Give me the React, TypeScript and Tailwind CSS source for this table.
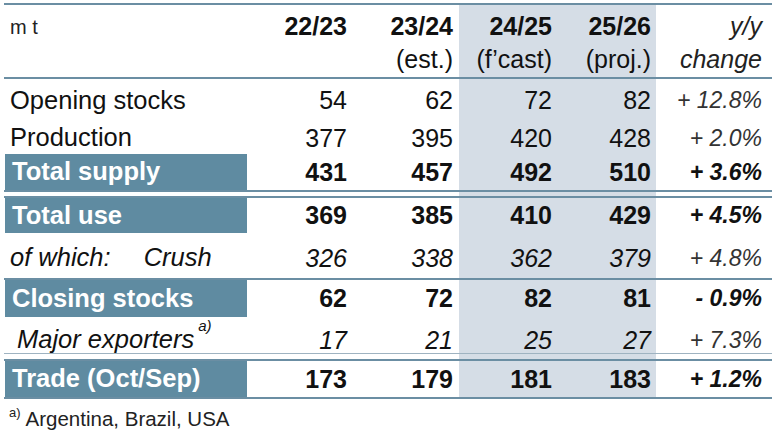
import React from 'react';

const cols = 'grid grid-cols-[243px_106px_106px_99px_98px_116px]';
const shade = 'bg-[#d5dde6]';
const line = 'border-[#6b8ea3]';

type Kind = 'normal' | 'bold' | 'italic';

interface RowProps {
  label: React.ReactNode;
  values: string[];
  change: string;
  kind: Kind;
  boxed?: boolean;
  className?: string;
  padTop?: string;
}

const pads = ['pr-[6px]', 'pr-[6px]', 'pr-[6px]', 'pr-[5px]'];

const Row: React.FC<RowProps> = ({ label, values, change, kind, boxed = false, className = '', padTop = '' }) => {
  const weight = kind === 'bold' ? 'font-bold' : 'font-normal';
  const style = kind === 'italic' ? 'italic' : 'not-italic';
  return (
    <div className={`${cols} ${className}`}>
      {boxed ? (
        <div className="ml-[1px] flex items-center bg-[#5f8ba1] pl-[7px] text-[25.5px] font-bold leading-none text-white">
          {label}
        </div>
      ) : (
        <div className={`flex items-center pl-[6px] text-[25.5px] leading-none text-[#111] ${padTop}`}>{label}</div>
      )}
      {values.map((v, i) => (
        <div
          key={i}
          className={`flex items-center justify-end text-[25px] leading-none text-[#111] ${weight} ${style} ${pads[i]} ${padTop} ${i >= 2 ? shade : ''}`}
        >
          {v}
        </div>
      ))}
      <div
        className={`flex items-center justify-end pr-[10px] text-[23px] italic leading-none ${
          kind === 'bold' ? 'font-bold text-[#111]' : 'font-normal text-[#333]'
        } ${padTop}`}
      >
        {change}
      </div>
    </div>
  );
};

const Gap: React.FC<{ className: string }> = ({ className }) => (
  <div className={`${cols} ${className}`}>
    <div />
    <div />
    <div />
    <div className={shade} />
    <div className={shade} />
    <div />
  </div>
);

export default function App() {
  const head1 = ['22/23', '23/24', '24/25', '25/26'];
  const head2 = ['', '(est.)', '(f\u2019cast)', '(proj.)'];

  return (
    <div
      className="h-[436px] w-[776px] overflow-hidden bg-white pt-[3px]"
      style={{ fontFamily: '"Liberation Sans", Arial, sans-serif' }}
    >
      <div className="ml-[4px] w-[768px]">
        {/* header */}
        <div className={`${cols} h-[76px] border-t-2 border-b-2 ${line}`}>
          <div className="pl-[6px] pt-[6px] text-[20px] leading-[33px] text-[#222]">m t</div>
          {head1.map((h, i) => (
            <div
              key={h}
              className={`flex flex-col items-end pt-[5px] text-[25px] leading-[33px] text-[#111] ${pads[i]} ${i >= 2 ? shade : ''}`}
            >
              <span className="font-bold">{h}</span>
              <span>{head2[i]}</span>
            </div>
          ))}
          <div className="flex flex-col items-end pr-[10px] pt-[5px] text-[25px] italic leading-[33px] text-[#222]">
            <span>y/y</span>
            <span>change</span>
          </div>
        </div>

        <Row className="h-[43px]" label="Opening stocks" values={['54', '62', '72', '82']} change="+ 12.8%" kind="normal" />
        <Row className="h-[32px]" label="Production" values={['377', '395', '420', '428']} change="+ 2.0%" kind="normal" />
        <Row
          className={`h-[38px] border-b-2 ${line}`}
          label="Total supply"
          values={['431', '457', '492', '510']}
          change="+ 3.6%"
          kind="bold"
          boxed
        />
        <Gap className={`h-[6px] border-b-2 ${line}`} />
        <Row className="h-[35px]" label="Total use" values={['369', '385', '410', '429']} change="+ 4.5%" kind="bold" boxed />
        <Row
          className="h-[45px]"
          padTop="pt-[5px]"
          label={
            <span className="italic">
              of which:<span className="ml-[33px]">Crush</span>
            </span>
          }
          values={['326', '338', '362', '379']}
          change="+ 4.8%"
          kind="italic"
        />
        <Row
          className={`h-[39px] border-t-2 ${line}`}
          label="Closing stocks"
          values={['62', '72', '82', '81']}
          change="- 0.9%"
          kind="bold"
          boxed
        />
        <Row
          className="h-[36px]"
          padTop="pt-[10px]"
          label={
            <span className="ml-[7px] italic">
              Major exporters<sup className="ml-[4px] text-[15px] align-[10px]">a)</sup>
            </span>
          }
          values={['17', '21', '25', '27']}
          change="+ 7.3%"
          kind="italic"
        />
        <Gap className={`h-[8px] border-t border-t-[#9fb3c1] border-b-2 border-b-[#6b8ea3]`} />
        <Row
          className={`h-[38px] border-b-2 ${line}`}
          label="Trade (Oct/Sep)"
          values={['173', '179', '181', '183']}
          change="+ 1.2%"
          kind="bold"
          boxed
        />

        <div className="mt-[10px] flex items-start pl-[5px] text-[20.5px] leading-none text-[#222]">
          <span className="mr-[5px] mt-[-3px] text-[13px]">a)</span>
          <span>Argentina, Brazil, USA</span>
        </div>
      </div>
    </div>
  );
}
